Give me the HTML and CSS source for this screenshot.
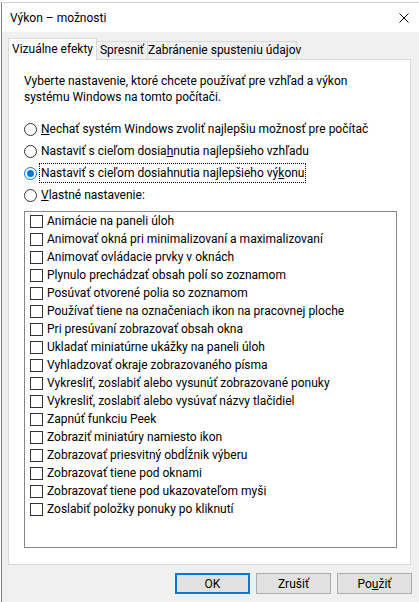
FILE: index.html
```html
<!DOCTYPE html>
<html lang="sk">
<head>
    <meta charset="UTF-8">
    <meta name="viewport" content="width=device-width, initial-scale=1.0">
    <title>Výkon – možnosti</title>
    <link rel="stylesheet" href="styles.css">
</head>
<body>
    <div class="behind"></div>
    <div class="window">
        <div class="titlebar">
            <span class="title">Výkon – možnosti</span>
            <svg class="close" width="10" height="10" viewBox="0 0 10 10">
                <path d="M0.5 0.5 L9.5 9.5 M9.5 0.5 L0.5 9.5" stroke="#000" stroke-width="1" fill="none"/>
            </svg>
        </div>

        <div class="content">
            <div class="tabs">
                <div class="tab active">Vizuálne efekty</div>
                <div class="tab tab-2">Spresniť</div>
                <div class="tab tab-3">Zabránenie spusteniu údajov</div>
            </div>

            <div class="panel">
                <p class="intro">Vyberte nastavenie, ktoré chcete používať pre vzhľad a výkon systému Windows na tomto počítači.</p>

                <div class="radios">
                    <div class="radio"><span class="circle"></span><span class="label"><u>N</u>echať systém Windows zvoliť najlepšiu možnosť pre počítač</span></div>
                    <div class="radio"><span class="circle"></span><span class="label">Nastaviť s cieľom dosia<u>h</u>nutia najlepšieho vzhľadu</span></div>
                    <div class="radio checked"><span class="circle"></span><span class="label focus">Nastaviť s cieľom dosiahnutia najlepšieho vý<u>k</u>onu</span></div>
                    <div class="radio"><span class="circle"></span><span class="label"><u>V</u>lastné nastavenie:</span></div>
                </div>

                <div class="listbox">
                    <div class="check"><span class="box"></span>Animácie na paneli úloh</div>
                    <div class="check"><span class="box"></span>Animovať okná pri minimalizovaní a maximalizovaní</div>
                    <div class="check"><span class="box"></span>Animovať ovládacie prvky v oknách</div>
                    <div class="check"><span class="box"></span>Plynulo prechádzať obsah polí so zoznamom</div>
                    <div class="check"><span class="box"></span>Posúvať otvorené polia so zoznamom</div>
                    <div class="check"><span class="box"></span>Používať tiene na označeniach ikon na pracovnej ploche</div>
                    <div class="check"><span class="box"></span>Pri presúvaní zobrazovať obsah okna</div>
                    <div class="check"><span class="box"></span>Ukladať miniatúrne ukážky na paneli úloh</div>
                    <div class="check"><span class="box"></span>Vyhladzovať okraje zobrazovaného písma</div>
                    <div class="check"><span class="box"></span>Vykresliť, zoslabiť alebo vysunúť zobrazované ponuky</div>
                    <div class="check"><span class="box"></span>Vykresliť, zoslabiť alebo vysúvať názvy tlačidiel</div>
                    <div class="check"><span class="box"></span>Zapnúť funkciu Peek</div>
                    <div class="check"><span class="box"></span>Zobraziť miniatúry namiesto ikon</div>
                    <div class="check"><span class="box"></span>Zobrazovať priesvitný obdĺžnik výberu</div>
                    <div class="check"><span class="box"></span>Zobrazovať tiene pod oknami</div>
                    <div class="check"><span class="box"></span>Zobrazovať tiene pod ukazovateľom myši</div>
                    <div class="check"><span class="box"></span>Zoslabiť položky ponuky po kliknutí</div>
                </div>
            </div>

            <div class="buttons">
                <button class="btn default">OK</button>
                <button class="btn">Zrušiť</button>
                <button class="btn">Po<u>u</u>žiť</button>
            </div>
        </div>
    </div>
</body>
</html>
```

FILE: styles.css
```css
body {
    margin: 0;
    width: 419px;
    height: 602px;
    overflow: hidden;
    font-family: Roboto, "Noto Sans", sans-serif;
    font-size: 12px;
    color: #000;
    background-color: #fff;
}
.behind {
    height: 2px;
    border-bottom: 1px solid #cfcfcf;
    background-color: #fff;
}
.window {
    margin-left: 1px;
    border-left: 1px solid #7f7f7f;
    height: 599px;
    display: flex;
    flex-direction: column;
}
.titlebar {
    height: 29px;
    background-color: #fff;
    display: flex;
    align-items: center;
    justify-content: space-between;
    padding: 0 10px 0 8px;
}
.title {
    font-size: 12px;
    padding-top: 1px;
}
.close {
    display: block;
    margin-right: 0;
}
.content {
    flex: 1;
    background-color: #f0f0f0;
    padding: 6px 7px 0 6px;
}
.tabs {
    display: flex;
    align-items: flex-end;
    height: 21px;
    position: relative;
    z-index: 1;
    padding-left: 2px;
}
.tab {
    height: 18px;
    line-height: 17px;
    box-sizing: border-box;
    border: 1px solid #d9d9d9;
    border-bottom: none;
    background-color: #f0f0f0;
    text-align: center;
    white-space: nowrap;
}
.tab.active {
    height: 22px;
    line-height: 20px;
    width: 89px;
    margin-left: -2px;
    margin-bottom: -1px;
    background-color: #fff;
    border-color: #d9d9d9;
    padding-bottom: 2px;
}
.tab-2 {
    width: 51px;
    border-left: none;
}
.tab-3 {
    width: 149px;
    border-left: none;
}
.panel {
    width: 403px;
    height: 506px;
    box-sizing: border-box;
    background-color: #fff;
    border: 1px solid #d9d9d9;
    padding: 13px 13px 0 15px;
}
.intro {
    margin: 0;
    line-height: 16px;
    width: 350px;
}
.radios {
    margin-top: 13px;
    margin-bottom: 5px;
}
.radio {
    height: 22px;
    display: flex;
    align-items: center;
    white-space: nowrap;
}
.circle {
    width: 13px;
    height: 13px;
    box-sizing: border-box;
    border: 1px solid #333;
    border-radius: 50%;
    background-color: #fff;
    margin-right: 2px;
    display: flex;
    align-items: center;
    justify-content: center;
}
.checked .circle {
    border-color: #0078d7;
}
.checked .circle::after {
    content: "";
    width: 7px;
    height: 7px;
    border-radius: 50%;
    background-color: #0078d7;
}
.label {
    padding: 1px 1px 1px 1px;
    line-height: 16px;
    border: 1px solid transparent;
}
.label.focus {
    border: 1px dotted #000;
}
.listbox {
    height: 337px;
    box-sizing: border-box;
    border: 1px solid #828790;
    background-color: #fff;
    padding: 0 0 0 5px;
}
.check {
    height: 18px;
    display: flex;
    align-items: center;
    white-space: nowrap;
}
.box {
    width: 13px;
    height: 13px;
    box-sizing: border-box;
    border: 1px solid #333;
    background-color: #fff;
    margin-right: 4px;
}
.buttons {
    display: flex;
    justify-content: flex-end;
    gap: 6px;
    margin-top: 8px;
    margin-right: 0;
}
.btn {
    width: 75px;
    height: 21px;
    box-sizing: border-box;
    background-color: #e1e1e1;
    border: 1px solid #adadad;
    font-family: inherit;
    font-size: 12px;
    color: #000;
    padding: 0;
}
.btn.default {
    border: 2px solid #0078d7;
}
```
